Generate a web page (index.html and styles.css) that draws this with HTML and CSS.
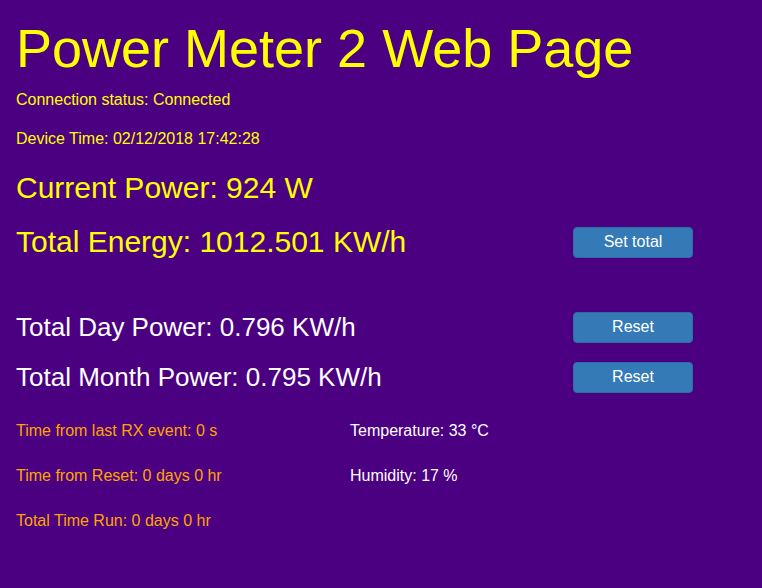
FILE: index.html
```html
<!DOCTYPE html>
<html>
<head>
<meta charset="utf-8">
<title>Power Meter 2 Web Page</title>
<link rel="stylesheet" href="styles.css">
</head>
<body>
<div class="page">
  <h1 class="title">Power Meter 2 Web Page</h1>
  <div class="status">Connection status: Connected</div>
  <div class="status time">Device Time: 02/12/2018 17:42:28</div>
  <div class="big current">Current Power: 924 W</div>
  <div class="grid">
    <div class="big span2">Total Energy: 1012.501 KW/h</div>
    <div class="cell-btn"><button class="btn">Set total</button></div>

    <div class="spacer"></div>

    <div class="mid span2">Total Day Power: 0.796 KW/h</div>
    <div class="cell-btn"><button class="btn">Reset</button></div>

    <div class="mid span2">Total Month Power: 0.795 KW/h</div>
    <div class="cell-btn"><button class="btn">Reset</button></div>

    <div class="spacer"></div>

    <div class="small orange">Time from last RX event: 0 s</div>
    <div class="small white">Temperature: 33 °C</div>
    <div></div>

    <div class="small orange">Time from Reset: 0 days 0 hr</div>
    <div class="small white">Humidity: 17 %</div>
    <div></div>

    <div class="small orange">Total Time Run: 0 days 0 hr</div>
    <div class="small"></div>
    <div></div>
  </div>
</div>
</body>
</html>
```
FILE: styles.css
```css
html, body {
  margin: 0;
  padding: 0;
  background: #4b0082;
  height: 100%;
}
body {
  font-family: "Liberation Sans", Arial, sans-serif;
  color: #ffff00;
}
.page {
  padding: 16px 0 0 16px;
}
.title {
  margin: 0;
  font-size: 54px;
  font-weight: normal;
  line-height: 64px;
  height: 64px;
}
.status {
  font-size: 16px;
  height: 40px;
  line-height: 40px;
}
.status.time {
  height: 38px;
  line-height: 38px;
}
.big {
  font-size: 30px;
  color: #ffff00;
}
.current {
  height: 59px;
  line-height: 59px;
}
.grid {
  display: grid;
  grid-template-columns: 334px 223px 120px;
  grid-template-rows: 50px 35px 50px 50px 6px 45px 45px 45px;
  align-items: center;
}
.span2 {
  grid-column: span 2;
}
.spacer {
  grid-column: 1 / -1;
}
.mid {
  font-size: 26px;
  color: #ffffff;
}
.cell-btn {
  display: flex;
  align-items: center;
}
.btn {
  width: 120px;
  height: 31px;
  padding: 0;
  border: 1px solid #2e6da4;
  border-radius: 4px;
  background: #337ab7;
  color: #ffffff;
  font-family: "Liberation Sans", Arial, sans-serif;
  font-size: 16px;
}
.small {
  font-size: 16px;
}
.orange {
  color: #ffa500;
}
.white {
  color: #ffffff;
}
```
